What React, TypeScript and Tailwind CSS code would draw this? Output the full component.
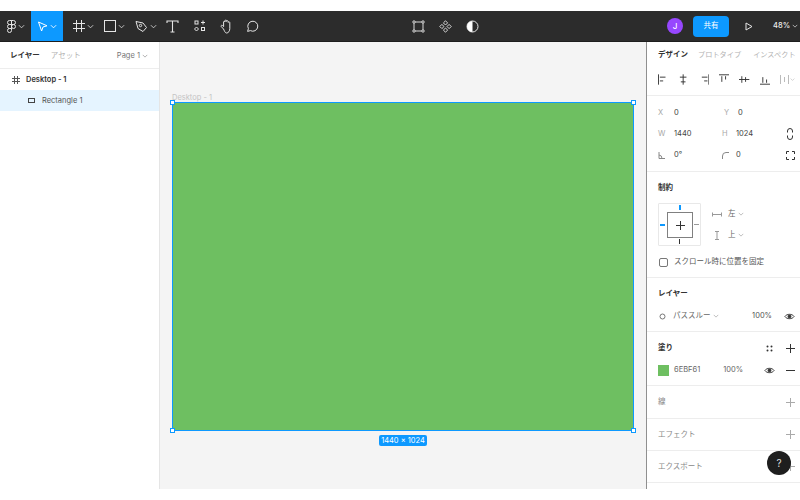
import React from "react";

const Chev = ({ c = "#d4d4d4", s = 7 }: { c?: string; s?: number }) => (
  <svg width={s} height={s} viewBox="0 0 8 8" fill="none" stroke={c} strokeWidth="1"><path d="M1 2.5 L4 5.5 L7 2.5" /></svg>
);
const Eye = () => (
  <svg width="11" height="11" viewBox="0 0 12 12" fill="none" stroke="#333" strokeWidth="1"><path d="M1 6 C3 2.8 9 2.8 11 6 C9 9.2 3 9.2 1 6Z" /><circle cx="6" cy="6" r="1.6" fill="#333" /></svg>
);
const Plus = ({ c = "#333" }: { c?: string }) => (
  <svg width="9" height="9" viewBox="0 0 9 9" stroke={c} strokeWidth="1"><path d="M4.5 0V9M0 4.5H9" /></svg>
);
const Align = ({ d }: { d: string }) => (
  <svg width="11" height="11" viewBox="0 0 11 11" fill="none" stroke="#333" strokeWidth="1"><path d={d} /></svg>
);
const Handle = ({ className }: { className: string }) => (
  <div className={`absolute w-[5px] h-[5px] bg-white border border-[#0d99ff] ${className}`} />
);
const Section = ({ h, className = "", children }: { h: string; className?: string; children: React.ReactNode }) => (
  <div className={`border-b border-[#ededed] pl-[11px] pr-[5px] shrink-0 ${h} ${className}`}>{children}</div>
);
const Field = ({ l, v, w = "w-[66px]", lw = "w-[16px]" }: { l: React.ReactNode; v: string; w?: string; lw?: string }) => (
  <div className={`flex items-center ${w}`}>
    <span className={`${lw} text-[#a8a8a8] flex items-center`}>{l}</span>
    <span className="text-[#444]">{v}</span>
  </div>
);

export default function App() {
  return (
    <div className="w-[800px] h-[500px] bg-white overflow-hidden flex flex-col pt-[11px] pb-[11px] text-[7.5px] text-[#333] font-['Inter','Noto_Sans_CJK_JP',sans-serif]">
      {/* toolbar */}
      <header className="h-[31px] bg-[#2c2c2c] border-b border-[#1e1e1e] flex items-center shrink-0 text-white">
        <div className="w-[31px] flex items-center justify-center gap-[2px] pl-[1px]">
          <svg width="9" height="13" viewBox="0 0 9 13" fill="none" stroke="#e5e5e5" strokeWidth="1"><path d="M4.5 .5H2.5a2 2 0 0 0 0 4h2zM4.5 .5h2a2 2 0 0 1 0 4h-2zM4.5 4.5H2.5a2 2 0 0 0 0 4h2zM6.5 4.5a2 2 0 1 1 0 4 2 2 0 0 1 0-4zM4.5 8.5H2.5a2 2 0 1 0 2 2z" /></svg>
          <Chev />
        </div>
        <div className="w-[32px] h-full bg-[#0d99ff] flex items-center justify-center gap-[2px]">
          <svg width="11" height="11" viewBox="0 0 11 11" fill="none" stroke="#fff" strokeWidth="1"><path d="M1.5 1 L10 4.8 L6 6 L4.6 10Z" /></svg>
          <Chev c="#fff" />
        </div>
        <div className="w-[33px] pl-[7px] flex items-center justify-center gap-[2px]">
          <svg width="12" height="12" viewBox="0 0 12 12" stroke="#e5e5e5" strokeWidth="1"><path d="M3.5 0V12M8.5 0V12M0 3.5H12M0 8.5H12" /></svg>
          <Chev />
        </div>
        <div className="w-[31px] pl-[6px] flex items-center justify-center gap-[2px]">
          <div className="w-[12px] h-[12px] border border-[#e5e5e5]" />
          <Chev />
        </div>
        <div className="w-[33px] pl-[4px] flex items-center justify-center gap-[2px]">
          <svg width="13" height="13" viewBox="0 0 13 13" fill="none" stroke="#e5e5e5" strokeWidth="1"><path d="M1 1.5 L8 3 L11.5 7.5 L8 11.5 L3 8.5Z" /><circle cx="5.5" cy="5.5" r="1.2" /></svg>
          <Chev />
        </div>
        <div className="w-[25px] flex items-center justify-center">
          <svg width="13" height="13" viewBox="0 0 13 13" fill="none" stroke="#e5e5e5" strokeWidth="1.1"><path d="M1 3V1H12V3M6.5 1V12M4.5 12H8.5" /></svg>
        </div>
        <div className="w-[30px] flex items-center justify-center">
          <svg width="12" height="12" viewBox="0 0 12 12" fill="none" stroke="#e5e5e5" strokeWidth="1"><rect x="1" y="1" width="3" height="3" /><path d="M9 .5V4.5M7 2.5H11" /><path d="M2.5 7 L4.5 9 L2.5 11 L.5 9Z" /><rect x="7.5" y="7.5" width="3" height="3" /></svg>
        </div>
        <div className="w-[24px] flex items-center justify-center">
          <svg width="14" height="15" viewBox="0 0 14 15" fill="none" stroke="#e5e5e5" strokeWidth="1"><path d="M3.5 10 L1.2 7.5 C.6 6.6 1.8 5.8 2.6 6.6 L3.6 7.6 V3 C3.6 2 5 2 5 3 V1.8 C5 .8 6.6 .8 6.6 1.8 V2.4 C6.6 1.5 8.2 1.5 8.2 2.5 V3.4 C8.2 2.6 9.8 2.6 9.8 3.6 V9.5 C9.8 12 8.5 14 6.5 14 C5 14 4.3 11.5 3.5 10Z" /></svg>
        </div>
        <div className="w-[27px] flex items-center justify-center">
          <svg width="13" height="13" viewBox="0 0 13 13" fill="none" stroke="#e5e5e5" strokeWidth="1"><path d="M1.6 11.4 L2.4 8.6 A5 5 0 1 1 4.4 10.6Z" /></svg>
        </div>
        <div className="flex-1 flex items-center gap-[14px] pl-[146px]">
          <svg width="13" height="13" viewBox="0 0 13 13" fill="none" stroke="#d8d8d8" strokeWidth="1"><rect x="2" y="2" width="9" height="9" /><circle cx="2" cy="2" r="1.2" fill="#2c2c2c" /><circle cx="11" cy="2" r="1.2" fill="#2c2c2c" /><circle cx="2" cy="11" r="1.2" fill="#2c2c2c" /><circle cx="11" cy="11" r="1.2" fill="#2c2c2c" /></svg>
          <svg width="13" height="13" viewBox="0 0 13 13" fill="none" stroke="#d8d8d8" strokeWidth="1"><path d="M6.5 .8 L8.6 2.9 L6.5 5 L4.4 2.9ZM6.5 8 L8.6 10.1 L6.5 12.2 L4.4 10.1ZM2.9 4.4 L5 6.5 L2.9 8.6 L.8 6.5ZM10.1 4.4 L12.2 6.5 L10.1 8.6 L8 6.5Z" /></svg>
          <svg width="13" height="13" viewBox="0 0 13 13"><circle cx="6.5" cy="6.5" r="5.5" fill="none" stroke="#e5e5e5" strokeWidth="1" /><path d="M6.5 1 A5.5 5.5 0 0 0 6.5 12Z" fill="#fff" /></svg>
        </div>
        <div className="w-[133px] shrink-0 flex items-center">
          <div className="w-[16px] h-[16px] shrink-0 rounded-full bg-[#9747ff] flex items-center justify-center text-[8px] font-medium">J</div>
          <div className="w-[36px] h-[21px] shrink-0 rounded-[4px] bg-[#0d99ff] flex items-center justify-center ml-[10px]">共有</div>
          <svg className="ml-[16px] shrink-0" width="8" height="9" viewBox="0 0 8 9" fill="none" stroke="#e5e5e5" strokeWidth="1"><path d="M1 1 L7 4.5 L1 8Z" /></svg>
          <span className="ml-[20px] font-medium text-[#eee]">48%</span>
          <span className="ml-[2px]"><Chev s={6} /></span>
        </div>
      </header>

      <main className="flex-1 flex min-h-0">
        {/* left panel */}
        <aside className="w-[160px] shrink-0 bg-white border-r border-[#e5e5e5]">
          <div className="h-[27px] pt-[1px] border-b border-[#ededed] flex items-center pl-[10px] pr-[11px]">
            <span className="font-semibold text-[#333]">レイヤー</span>
            <span className="ml-[11px] text-[#b3b3b3]">アセット</span>
            <span className="ml-auto text-[#777] flex items-center gap-[2px]">Page 1 <Chev c="#999" s={6} /></span>
          </div>
          <div className="h-[21px] pt-[1px] flex items-center pl-[12px] font-semibold text-[#333]">
            <svg width="8" height="8" viewBox="0 0 8 8" stroke="#555" strokeWidth="1"><path d="M2.5 0V8M5.5 0V8M0 2.5H8M0 5.5H8" /></svg>
            <span className="ml-[6px]">Desktop - 1</span>
          </div>
          <div className="h-[21px] bg-[#e5f4ff] flex items-center pl-[28px] text-[#555]">
            <div className="w-[7px] h-[5px] border border-[#444]" />
            <span className="ml-[7px]">Rectangle 1</span>
          </div>
        </aside>

        {/* canvas */}
        <section className="relative flex-1 bg-[#f4f4f4]">
          <span className="absolute left-[12px] top-[50px] text-[#c4c4c4]">Desktop - 1</span>
          <div className="absolute left-[12px] top-[60px] w-[462px] h-[329px] bg-[#6ebf61] border border-[#0d99ff]">
            <Handle className="-left-[3px] -top-[3px]" />
            <Handle className="-right-[3px] -top-[3px]" />
            <Handle className="-left-[3px] -bottom-[3px]" />
            <Handle className="-right-[3px] -bottom-[3px]" />
          </div>
          <div className="absolute left-[219px] top-[393px] w-[48px] h-[11px] rounded-[2px] bg-[#0d99ff] text-white flex items-center justify-center whitespace-nowrap">1440 × 1024</div>
        </section>

        {/* right panel */}
        <aside className="relative w-[154px] shrink-0 bg-white border-l border-[#8f8f8f] overflow-hidden flex flex-col">
          <div className="h-[26px] flex items-center pl-[11px] whitespace-nowrap shrink-0">
            <span className="font-semibold text-[#333]">デザイン</span>
            <span className="ml-[10px] text-[#b3b3b3] text-[7.2px]">プロトタイプ</span>
            <span className="ml-[12px] text-[#b3b3b3] text-[7.2px]">インスペクト</span>
          </div>
          <Section h="h-[28px]" className="flex items-start pt-[6px] gap-[10px]">
            <Align d="M.5 0V11M2 3H8M2 7H5.5" />
            <Align d="M5.5 0V11M2 3H9M3 8H8" />
            <Align d="M10.5 0V11M3 3H9M5.5 7H9" />
            <Align d="M0 .5H11M3 2V8M7 2V5.5" />
            <Align d="M0 5.5H11M3 2V9M7 3V8" />
            <Align d="M0 10.5H11M3 3V9M7 5.5V9" />
            <span className="flex items-center gap-[1px]"><svg width="9" height="11" viewBox="0 0 9 11" stroke="#bbb"><path d="M.5 1V10M8.5 1V10M4.5 3V8" /></svg><Chev c="#bbb" s={5} /></span>
          </Section>
          <Section h="h-[76px]" className="flex flex-col pt-[10px] gap-[7px]">
            <div className="flex h-[14px]"><Field l="X" v="0" /><Field l="Y" v="0" lw="w-[14px]" /></div>
            <div className="flex h-[14px]"><Field l="W" v="1440" /><Field l="H" v="1024" lw="w-[14px]" /><span className="ml-auto mr-[1px] flex items-center"><svg width="8" height="12" viewBox="0 0 8 12" fill="none" stroke="#333"><path d="M1.5 4.5V3a2.5 2.5 0 0 1 5 0v1.5M1.5 7.5V9a2.5 2.5 0 0 0 5 0V7.5" /></svg></span></div>
            <div className="flex h-[14px]">
              <Field l={<svg width="7" height="7" viewBox="0 0 7 7" fill="none" stroke="#888"><path d="M1 0V6.5H7M1 3 Q4 3.2 4 6.5" /></svg>} v="0°" />
              <Field l={<svg width="7" height="7" viewBox="0 0 7 7" fill="none" stroke="#888"><path d="M.5 7V4 Q.5 .5 4 .5H7" /></svg>} v="0" lw="w-[14px]" />
              <span className="ml-auto flex items-center"><svg width="9" height="9" viewBox="0 0 9 9" fill="none" stroke="#333"><path d="M.5 3V.5H3M6 .5H8.5V3M8.5 6V8.5H6M3 8.5H.5V6" /></svg></span>
            </div>
          </Section>
          <Section h="h-[106px]" className="flex flex-col">
            <div className="font-semibold h-[31px] flex items-center text-[#333]">制約</div>
            <div className="flex">
              <div className="relative w-[43px] h-[43px] border border-[#e8e8e8] rounded-[1px] shrink-0">
                <div className="absolute left-[8px] top-[8px] w-[26px] h-[26px] border border-[#808080] flex items-center justify-center"><Plus /></div>
                <div className="absolute left-[20px] top-[1px] w-[2px] h-[5px] bg-[#0d99ff]" />
                <div className="absolute left-[20px] bottom-[1px] w-[1px] h-[5px] bg-[#333]" />
                <div className="absolute left-[1px] top-[20px] h-[2px] w-[5px] bg-[#0d99ff]" />
                <div className="absolute right-[1px] top-[20px] h-[1px] w-[5px] bg-[#999]" />
              </div>
              <div className="flex flex-col ml-[11px] gap-[7px] pt-[4px]">
                <div className="flex items-center h-[14px]">
                  <svg width="10" height="7" viewBox="0 0 10 7" stroke="#999"><path d="M.5 1.5V5.5M9.5 1.5V5.5M1 3.5H9" /></svg>
                  <span className="ml-[6px] text-[#666]">左</span><span className="ml-[2px]"><Chev c="#aaa" s={6} /></span>
                </div>
                <div className="flex items-center h-[14px]">
                  <svg className="ml-[2px]" width="6" height="9" viewBox="0 0 6 9" stroke="#999"><path d="M1 .5H5M1 8.5H5M3 1V8" /></svg>
                  <span className="ml-[8px] text-[#666]">上</span><span className="ml-[2px]"><Chev c="#aaa" s={6} /></span>
                </div>
              </div>
            </div>
            <div className="flex items-center mt-[9px] h-[14px]">
              <div className="w-[9px] h-[9px] border border-[#777] rounded-[2px] ml-[1px]" />
              <span className="ml-[6px] text-[#555]">スクロール時に位置を固定</span>
            </div>
          </Section>
          <Section h="h-[54px]" className="pt-[1px]">
            <div className="font-semibold h-[30px] flex items-center text-[#333]">レイヤー</div>
            <div className="flex items-center h-[14px]">
              <svg className="ml-[1px]" width="7" height="7" viewBox="0 0 7 7" fill="none" stroke="#777"><circle cx="3.5" cy="3.5" r="2.5" /></svg>
              <span className="ml-[7px] text-[#666]">パススルー</span><span className="ml-[2px]"><Chev c="#aaa" s={6} /></span>
              <span className="ml-auto text-[#555] mr-[12px]">100%</span>
              <Eye />
            </div>
          </Section>
          <Section h="h-[54px]" className="pt-[1px]">
            <div className="h-[30px] flex items-center font-semibold text-[#333]">
              塗り
              <svg className="ml-auto mr-[13px]" width="7" height="7" viewBox="0 0 7 7" fill="#333"><circle cx="1.5" cy="1.5" r="1" /><circle cx="5.5" cy="1.5" r="1" /><circle cx="1.5" cy="5.5" r="1" /><circle cx="5.5" cy="5.5" r="1" /></svg>
              <Plus />
            </div>
            <div className="flex items-center h-[14px]">
              <div className="w-[11px] h-[11px] bg-[#6ebf61]" />
              <span className="ml-[5px] text-[#666]">6EBF61</span>
              <span className="ml-[23px] text-[#666]">100%</span>
              <span className="ml-auto mr-[11px] flex"><Eye /></span>
              <div className="w-[9px] h-[1px] bg-[#333]" />
            </div>
          </Section>
          <Section h="h-[33px]" className="flex items-center text-[#888]">線<span className="ml-auto"><Plus c="#aaa" /></span></Section>
          <Section h="h-[32px]" className="flex items-center text-[#888]">エフェクト<span className="ml-auto"><Plus c="#aaa" /></span></Section>
          <Section h="h-[32px]" className="flex items-center text-[#888]">エクスポート<span className="ml-auto"><Plus c="#aaa" /></span></Section>
          <div className="absolute left-[120px] top-[409px] w-[24px] h-[24px] rounded-full bg-[#1e1e1e] text-[#ddd] text-[10px] flex items-center justify-center">?</div>
        </aside>
      </main>
    </div>
  );
}
